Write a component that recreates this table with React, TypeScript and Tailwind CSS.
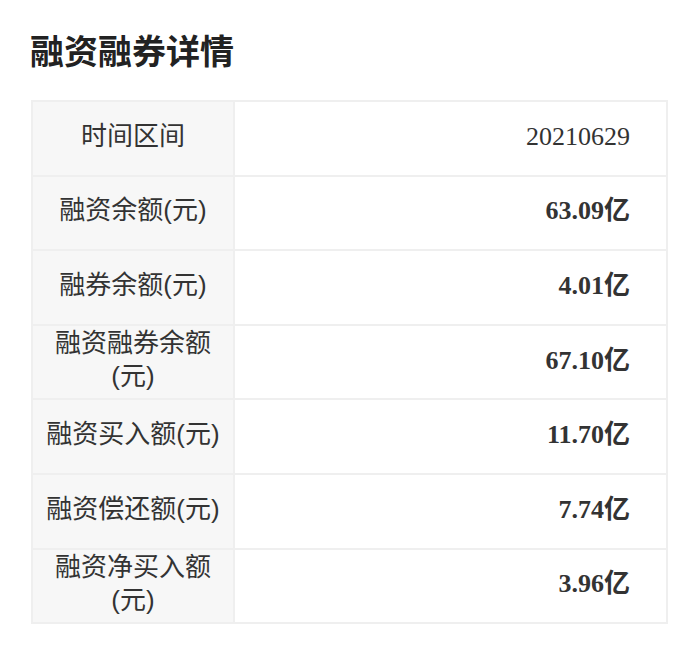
const rows: { label: string; value: string; bold: boolean }[] = [
  { label: "时间区间", value: "20210629", bold: false },
  { label: "融资余额(元)", value: "63.09亿", bold: true },
  { label: "融券余额(元)", value: "4.01亿", bold: true },
  { label: "融资融券余额(元)", value: "67.10亿", bold: true },
  { label: "融资买入额(元)", value: "11.70亿", bold: true },
  { label: "融资偿还额(元)", value: "7.74亿", bold: true },
  { label: "融资净买入额(元)", value: "3.96亿", bold: true },
];

export default function App() {
  return (
    <div className="min-h-[654px] w-[700px] bg-white px-[31px] pt-[26px] text-[#333]">
      <h1 className="-ml-px text-[34px] leading-[48px] font-bold font-['Noto_Sans_CJK_SC',sans-serif] text-[#222]">
        融资融券详情
      </h1>
      <table className="mt-[26px] w-[637px] border-collapse">
        <tbody>
          {rows.map((r) => (
            <tr key={r.label} className="h-[74.6px]">
              <td className="w-[202px] border-2 border-[#efefef] bg-[#f7f7f7] px-[10px] pb-[4px] text-center text-[26px] leading-[33px] font-['Liberation_Sans','Noto_Sans_CJK_SC',sans-serif]">
                {r.label}
              </td>
              <td
                className={
                  r.bold
                    ? "border-2 border-[#efefef] pr-[36px] pb-[4px] text-right text-[26px] font-bold font-['Liberation_Serif','Noto_Sans_CJK_SC',serif]"
                    : "border-2 border-[#efefef] pr-[36px] pb-[4px] text-right text-[26px] font-['Liberation_Serif','Noto_Sans_CJK_SC',serif]"
                }
              >
                {r.value}
              </td>
            </tr>
          ))}
        </tbody>
      </table>
    </div>
  );
}
